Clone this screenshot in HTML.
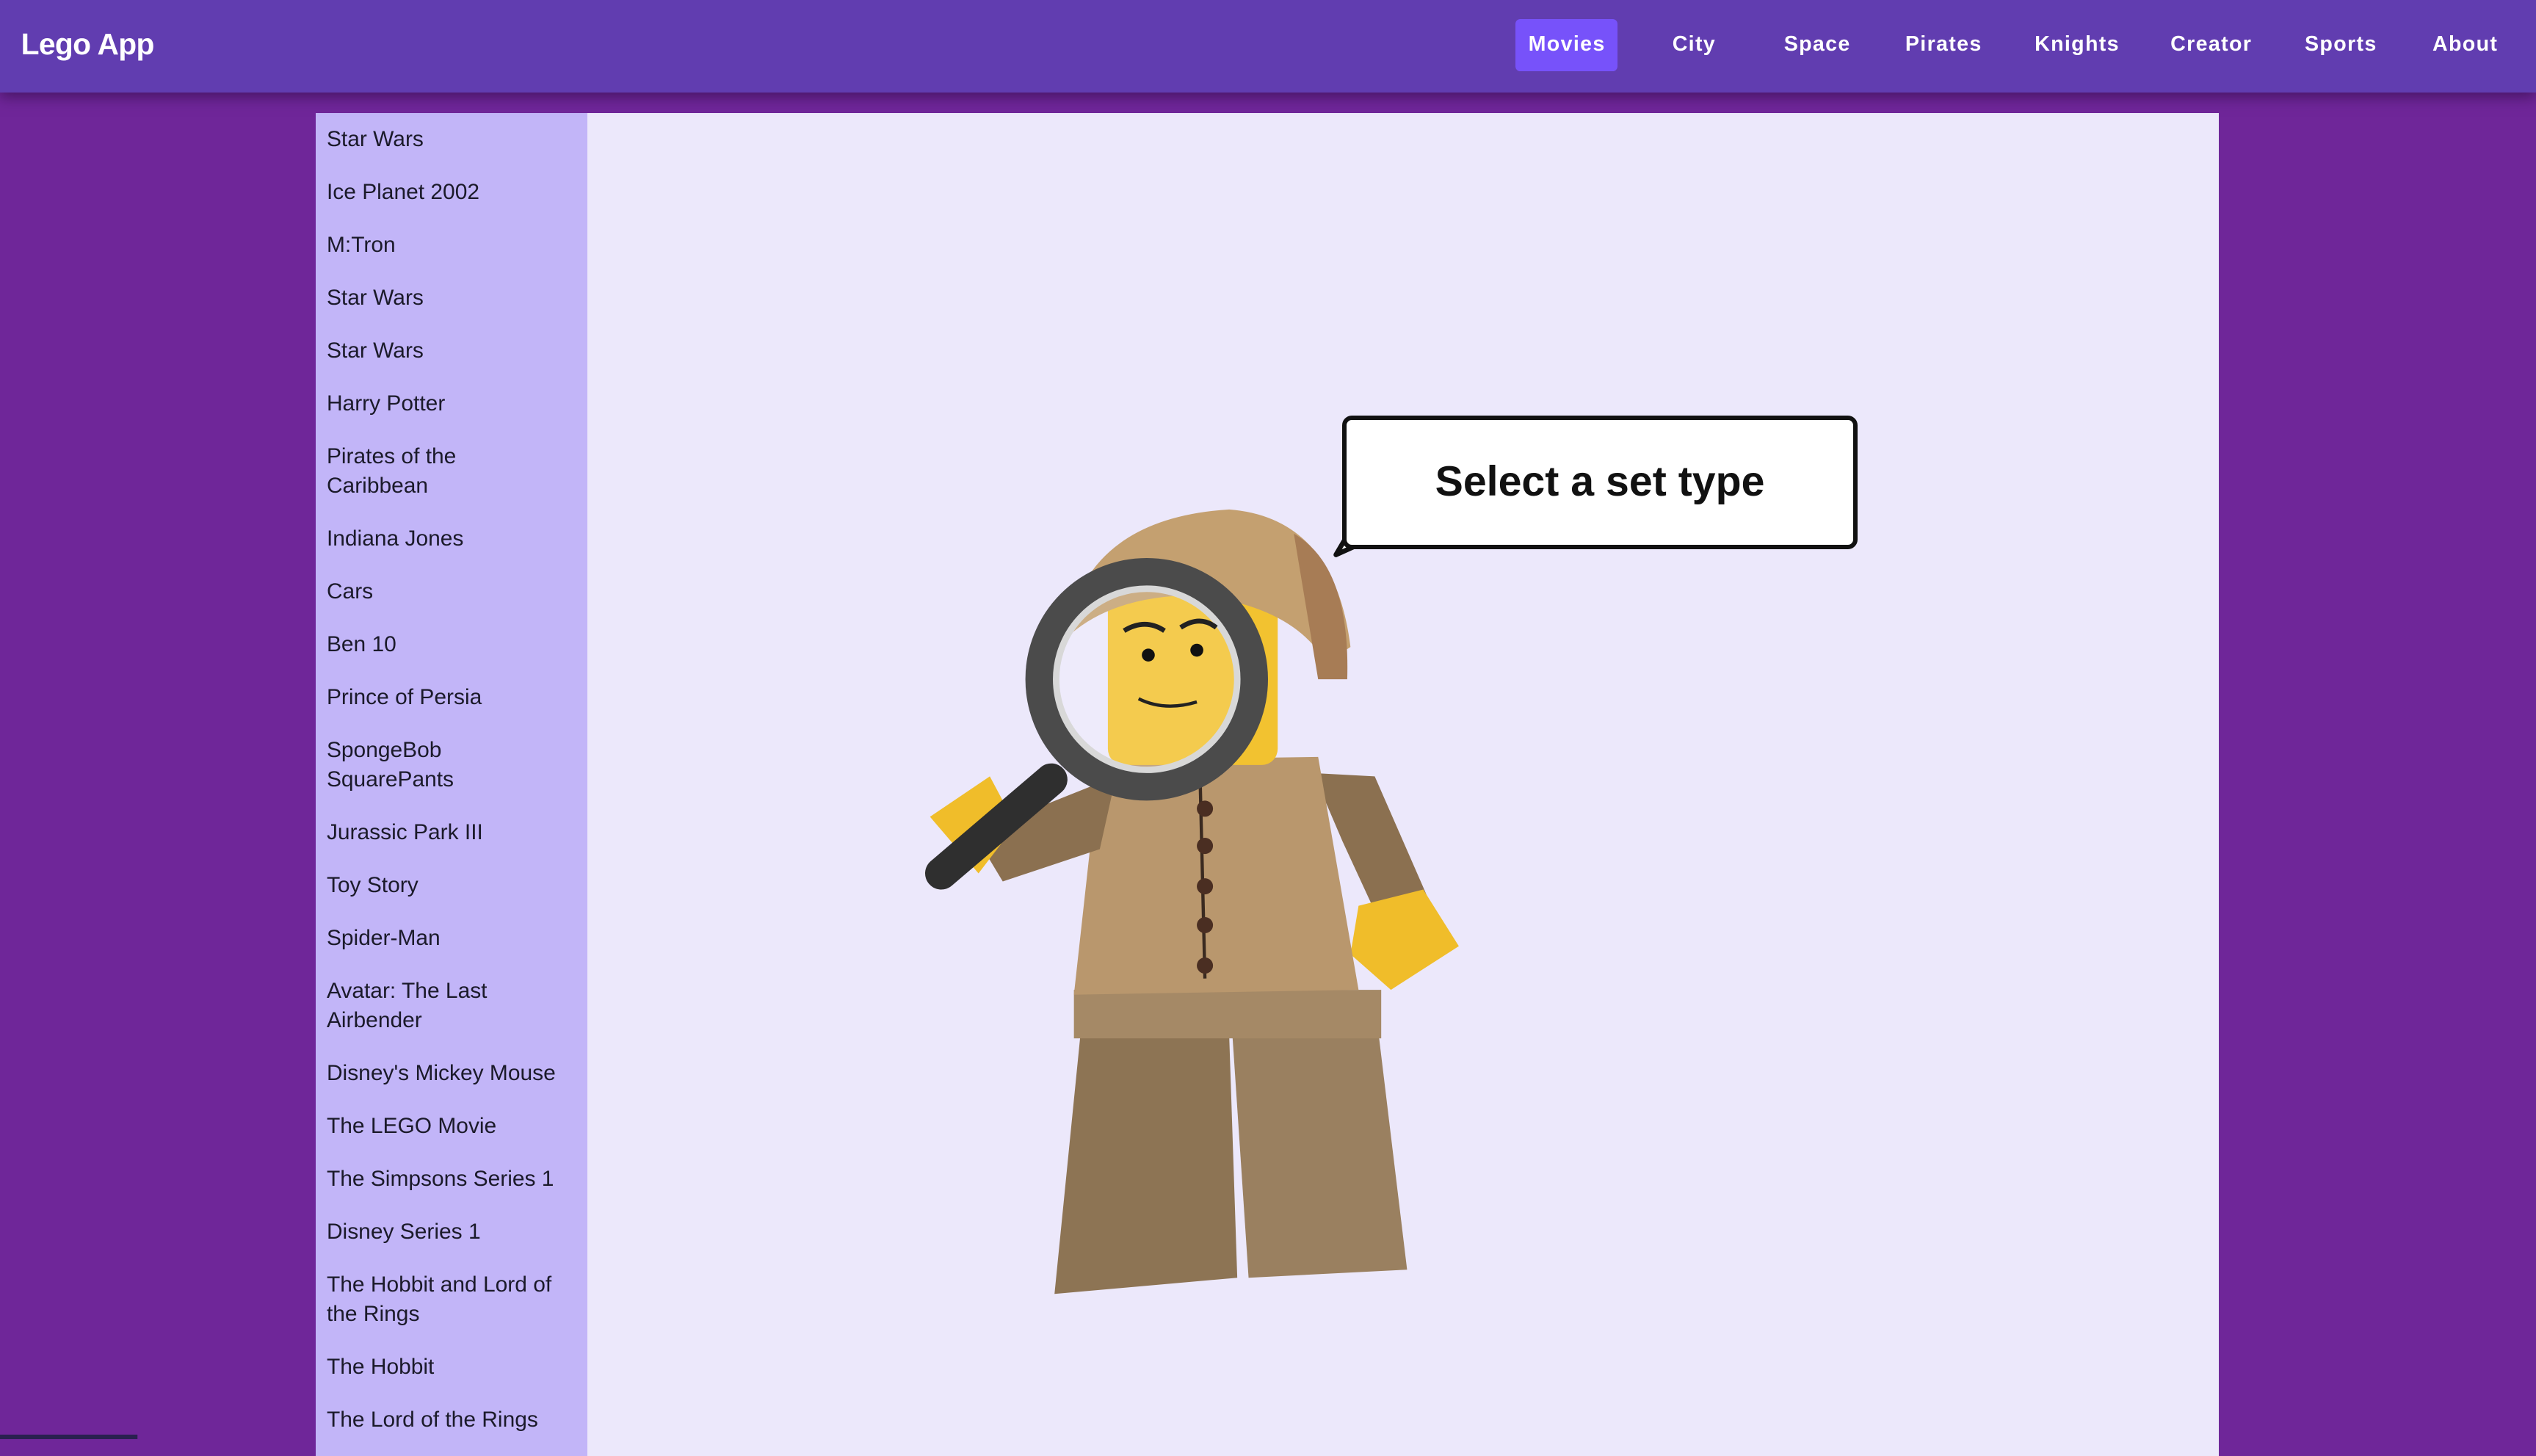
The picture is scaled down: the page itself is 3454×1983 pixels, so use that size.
<!DOCTYPE html>
<html><head><meta charset="utf-8">
<style>
html{zoom:2.2028}
body{margin:0;width:1568px;height:890px;overflow:hidden;background:#6f2699;font-family:"Liberation Sans",sans-serif;position:relative}
.hdr{position:absolute;left:0;top:0;width:1568px;height:57px;background:#613db0;box-shadow:0 3px 8px rgba(40,10,60,.55);z-index:2}
.logo{position:absolute;left:13px;top:17px;color:#fff;font-weight:bold;font-size:18.5px;letter-spacing:-.3px}
.nav{position:absolute;top:20px;color:#fff;font-size:13px;letter-spacing:.6px;font-weight:600}
.act{position:absolute;left:937px;top:12px;width:63px;height:32px;background:#7752fa;border-radius:3px}
.side{position:absolute;left:195px;top:70px;width:168px;height:830px;background:#c2b5f8}
.side div{padding:7.3px 0 7.4px 7px;line-height:18px;font-size:13.6px;color:#1b1a2a;white-space:nowrap}
.main{position:absolute;left:363px;top:70px;width:1009px;height:830px;background:#ece8fb}
.bub{position:absolute;left:830px;top:257px;width:313px;height:77px;border:3px solid #111;border-radius:6px;background:#fff;text-align:center;line-height:77px;font-weight:bold;font-size:26px;color:#111}
</style></head><body>
<div class="hdr">
<div class="logo">Lego App</div>
<div class="act"></div>
<span class="nav" style="left:945px">Movies</span>
<span class="nav" style="left:1034px">City</span>
<span class="nav" style="left:1103px">Space</span>
<span class="nav" style="left:1178px">Pirates</span>
<span class="nav" style="left:1258px">Knights</span>
<span class="nav" style="left:1342px">Creator</span>
<span class="nav" style="left:1425px">Sports</span>
<span class="nav" style="left:1504px">About</span>
</div>
<div class="main"></div>
<div class="side">
<div>Star Wars</div><div>Ice Planet 2002</div><div>M:Tron</div><div>Star Wars</div><div>Star Wars</div><div>Harry Potter</div>
<div>Pirates of the<br>Caribbean</div><div>Indiana Jones</div><div>Cars</div><div>Ben 10</div><div>Prince of Persia</div>
<div>SpongeBob<br>SquarePants</div><div>Jurassic Park III</div><div>Toy Story</div><div>Spider-Man</div>
<div>Avatar: The Last<br>Airbender</div><div>Disney's Mickey Mouse</div><div>The LEGO Movie</div><div>The Simpsons Series 1</div>
<div>Disney Series 1</div><div>The Hobbit and Lord of<br>the Rings</div><div>The Hobbit</div><div>The Lord of the Rings</div>
</div>
<svg style="position:absolute;left:0;top:0" width="1568" height="890" viewBox="0 0 1568 890">
<path d="M836 326 L826 343 L846 334 Z" fill="#fff" stroke="#111" stroke-width="3" stroke-linejoin="round"/>
<path d="M668 640 L760 640 L765 790 L652 800 Z" fill="#8d7454"/>
<path d="M762 640 L852 636 L870 785 L772 790 Z" fill="#9a8060"/>
<rect x="664" y="612" width="190" height="30" fill="#a58966"/>
<path d="M812 478 L850 480 L885 560 L860 585 L830 520 Z" fill="#8b7050"/>
<path d="M840 560 L880 550 L902 585 L860 612 L835 590 Z" fill="#f0bd2a"/>
<path d="M680 470 L815 468 L840 612 L664 615 Z" fill="#b9976d"/>
<path d="M742 480 L745 605" stroke="#3a2a20" stroke-width="2"/>
<g fill="#4a2e22"><circle cx="745" cy="500" r="5"/><circle cx="745" cy="523" r="5"/><circle cx="745" cy="548" r="5"/><circle cx="745" cy="572" r="5"/><circle cx="745" cy="597" r="5"/></g>
<path d="M690 480 L640 500 L605 520 L620 545 L680 525 Z" fill="#8b7050"/>
<path d="M575 505 L612 480 L628 510 L605 540 Z" fill="#f0bd2a"/>
<rect x="685" y="365" width="105" height="108" rx="10" fill="#f2c230"/>
<path d="M662 380 Q680 320 760 315 Q825 320 835 400 L820 410 Q800 375 740 368 Q690 368 662 392 Z" fill="#c4a070"/>
<path d="M800 330 Q835 350 833 420 L815 420 Z" fill="#a77c55"/>
<line x1="650" y1="482" x2="582" y2="540" stroke="#2f2f2f" stroke-width="20" stroke-linecap="round"/>
<circle cx="709" cy="420" r="66" fill="rgba(255,255,255,.15)" stroke="#4b4b4b" stroke-width="18"/>
<circle cx="709" cy="420" r="56" fill="none" stroke="#d8d8d8" stroke-width="4"/>
<circle cx="710" cy="405" r="4" fill="#111"/><circle cx="740" cy="402" r="4" fill="#111"/>
<path d="M704 432 Q720 440 740 434" stroke="#222" stroke-width="2" fill="none"/>
<path d="M695 390 Q708 382 720 390 M730 388 Q742 380 752 388" stroke="#222" stroke-width="3" fill="none"/>
<rect x="0" y="887" width="85" height="3" fill="#2a2050"/>
</svg>
<div class="bub">Select a set type</div>
</body></html>
